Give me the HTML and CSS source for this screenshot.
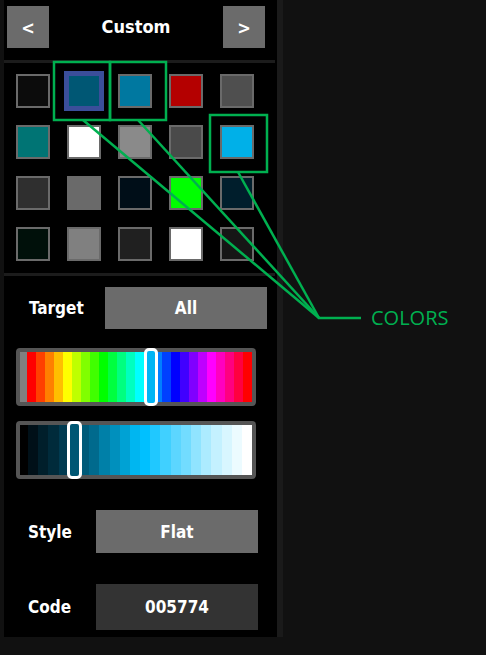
FILE: index.html
```html
<!DOCTYPE html>
<html lang="en">
<head>
  <meta charset="UTF-8" />
  <meta name="viewport" content="width=device-width, initial-scale=1.0" />
  <title>Color Picker</title>
  <link rel="stylesheet" href="styles.css">
</head>
<body>
  <div id="panel">
    <div class="head">
      <button class="nav">&lt;</button>
      <span class="title">Custom</span>
      <button class="nav">&gt;</button>
    </div>
    <div class="sep"></div>

    <div class="grid">
      <div class="sw" style="background:#0c0c0c"></div>
      <div class="sw selected" style="background:#005774"></div>
      <div class="sw" style="background:#0078a0"></div>
      <div class="sw" style="background:#b40000"></div>
      <div class="sw" style="background:#4f4f4f"></div>

      <div class="sw" style="background:#007474"></div>
      <div class="sw" style="background:#ffffff"></div>
      <div class="sw" style="background:#8a8a8a"></div>
      <div class="sw" style="background:#4a4a4a"></div>
      <div class="sw" style="background:#00b0e8"></div>

      <div class="sw" style="background:#2f2f2f"></div>
      <div class="sw" style="background:#6a6a6a"></div>
      <div class="sw" style="background:#000e18"></div>
      <div class="sw" style="background:#00ff00"></div>
      <div class="sw" style="background:#001e2c"></div>

      <div class="sw" style="background:#00100a"></div>
      <div class="sw" style="background:#808080"></div>
      <div class="sw" style="background:#202020"></div>
      <div class="sw" style="background:#ffffff"></div>
      <div class="sw" style="background:#161616"></div>
    </div>
    <div class="sep"></div>

    <div class="lower">
      <div class="row row-wide">
        <span class="label">Target</span>
        <div class="value">All</div>
      </div>

      <div class="bar hue">
        <div class="first" style="background:#808080"></div>
        <div style="background:#ff0000"></div>
        <div style="background:#ff4000"></div>
        <div style="background:#ff8000"></div>
        <div style="background:#ffbf00"></div>
        <div style="background:#ffff00"></div>
        <div style="background:#bfff00"></div>
        <div style="background:#80ff00"></div>
        <div style="background:#40ff00"></div>
        <div style="background:#00ff00"></div>
        <div style="background:#00ff40"></div>
        <div style="background:#00ff80"></div>
        <div style="background:#00ffbf"></div>
        <div style="background:#00ffff"></div>
        <div style="background:#00bfff"></div>
        <div style="background:#0080ff"></div>
        <div style="background:#0040ff"></div>
        <div style="background:#0000ff"></div>
        <div style="background:#4000ff"></div>
        <div style="background:#8000ff"></div>
        <div style="background:#bf00ff"></div>
        <div style="background:#ff00ff"></div>
        <div style="background:#ff00bf"></div>
        <div style="background:#ff0080"></div>
        <div style="background:#ff0040"></div>
        <div style="background:#ff0000"></div>
        <span class="thumb hue-thumb"></span>
      </div>

      <div class="bar shade">
        <div class="first" style="background:#000000"></div>
        <div style="background:#001018"></div>
        <div style="background:#001f2b"></div>
        <div style="background:#002b3b"></div>
        <div style="background:#003a50"></div>
        <div style="background:#004a63"></div>
        <div style="background:#005a78"></div>
        <div style="background:#006a8d"></div>
        <div style="background:#0080a8"></div>
        <div style="background:#0090bd"></div>
        <div style="background:#00a2d4"></div>
        <div style="background:#00b6f0"></div>
        <div style="background:#00c0ff"></div>
        <div style="background:#20c8ff"></div>
        <div style="background:#40d0ff"></div>
        <div style="background:#5cd6ff"></div>
        <div style="background:#72dcff"></div>
        <div style="background:#90e4ff"></div>
        <div style="background:#acebff"></div>
        <div style="background:#c4f1ff"></div>
        <div style="background:#d8f6ff"></div>
        <div style="background:#ecfbff"></div>
        <div style="background:#ffffff"></div>
        <span class="thumb shade-thumb"></span>
      </div>

      <div class="row row-style">
        <span class="label">Style</span>
        <div class="value">Flat</div>
      </div>

      <div class="row row-code">
        <span class="label">Code</span>
        <div class="value code">005774</div>
      </div>
    </div>
  </div>

  <!-- annotation -->
  <svg class="callout" width="486" height="655" viewBox="0 0 486 655">
    <g fill="none" stroke="#00b050" stroke-width="2.5">
      <rect x="54" y="62" width="56" height="58" />
      <rect x="110" y="62" width="56" height="58" />
      <rect x="210" y="115" width="57" height="57" />
      <line x1="83" y1="120" x2="319" y2="318" />
      <line x1="138" y1="120" x2="319" y2="318" />
      <line x1="238" y1="172" x2="319" y2="318" />
      <line x1="318" y1="318" x2="361" y2="318" />
    </g>
  </svg>
  <span class="callout-text">COLORS</span>
</body>
</html>
```

FILE: styles.css
```css
body {
  margin: 0;
  background-color: #111111;
  font-family: "DejaVu Sans Condensed", "DejaVu Sans", sans-serif;
  font-stretch: condensed;
  font-weight: bold;
  color: white;
  position: relative;
  width: 486px;
  height: 655px;
  overflow: hidden;
}

#panel {
  margin-left: 4px;
  width: 273px;
  height: 637px;
  background-color: black;
  border-right: 6px solid #1a1a1a;
}

.head {
  display: flex;
  align-items: center;
  justify-content: space-between;
  height: 42px;
  padding: 6px 12px 12px 3px;
}

.nav {
  width: 42px;
  height: 42px;
  border: none;
  padding: 0;
  background-color: #6b6b6b;
  color: white;
  font-family: inherit;
  font-stretch: condensed;
  font-weight: bold;
  font-size: 18px;
}

.title {
  font-size: 18px;
  padding-bottom: 2px;
}

.sep {
  width: 271px;
  height: 3px;
  background-color: #1c1c1c;
}

.grid {
  display: grid;
  grid-template-columns: repeat(5, 34px);
  grid-auto-rows: 34px;
  gap: 17px;
  padding: 11px 0 12px 12px;
}

.sw {
  box-sizing: border-box;
  border: 2px solid #6a6a6a;
}

.sw.selected {
  border-color: #3b4e9a;
  box-shadow: 0 0 0 3px #3b4e9a;
}

.lower {
  padding: 11px 0 0 12px;
}

.row {
  display: flex;
  align-items: center;
  font-size: 17px;
}

.label {
  padding-left: 13px;
}

.value {
  margin-left: auto;
  width: 162px;
  display: flex;
  align-items: center;
  justify-content: center;
  background-color: #6b6b6b;
}

.row-wide {
  padding-right: 10px;
}

.row-wide .value {
  height: 42px;
}

.row-style {
  margin-top: 31px;
  padding-right: 19px;
}

.row-style .label {
  padding-left: 12px;
}

.row-style .value {
  height: 43px;
}

.row-code {
  margin-top: 31px;
  padding-right: 19px;
}

.row-code .label {
  padding-left: 12px;
}

.value.code {
  height: 46px;
  background-color: #333333;
}

.bar {
  position: relative;
  display: flex;
  width: 240px;
  height: 58px;
  box-sizing: border-box;
  border: 4px solid #555555;
  border-radius: 4px;
}

.bar div {
  flex: 1;
}

.hue {
  margin-top: 19px;
}

.hue .first {
  flex: 0 0 7px;
}

.shade {
  margin-top: 15px;
}

.shade .first {
  flex: 0 0 8px;
}

.thumb {
  position: absolute;
  top: -4px;
  height: 58px;
  box-sizing: border-box;
  border: 3px solid white;
  border-radius: 5px;
}

.hue-thumb {
  left: 124px;
  width: 14px;
  background-color: #00b4f4;
}

.shade-thumb {
  left: 47px;
  width: 15px;
  background-color: #005774;
}

.callout {
  position: absolute;
  top: 0;
  left: 0;
  pointer-events: none;
}

.callout-text {
  position: absolute;
  left: 371px;
  top: 305px;
  font-family: "Open Sans", sans-serif;
  font-stretch: normal;
  font-weight: normal;
  font-size: 20px;
  line-height: 26px;
  color: #00b050;
}
```
